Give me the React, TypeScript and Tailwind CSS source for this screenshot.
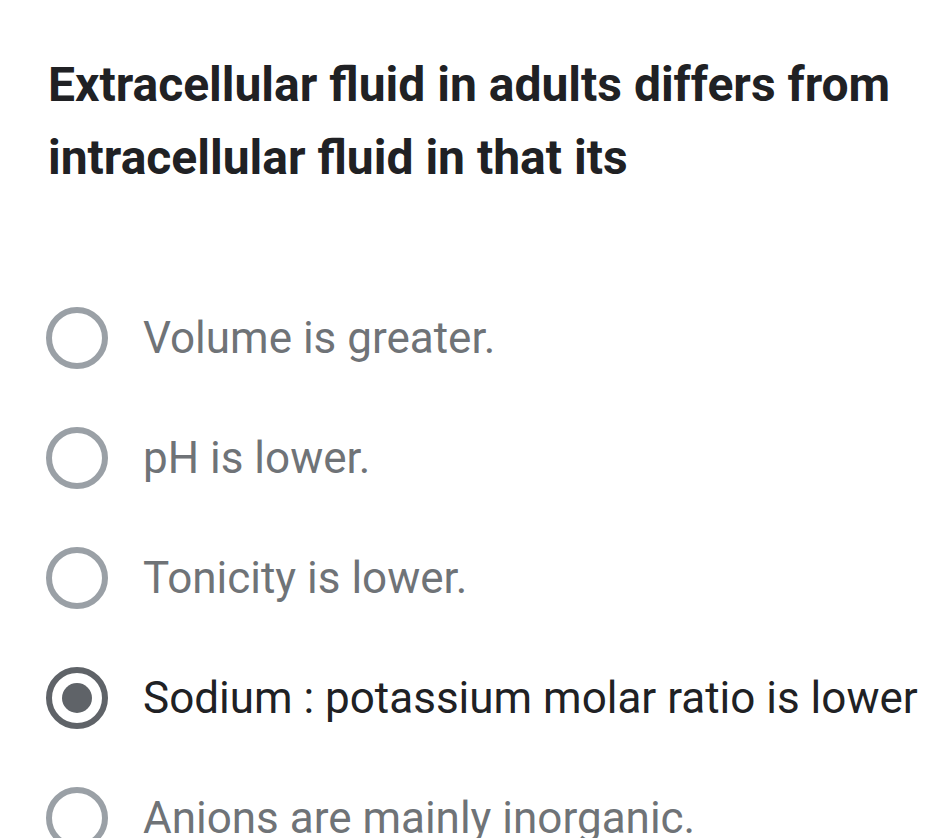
import React from "react";

const options = [
  "Volume is greater.",
  "pH is lower.",
  "Tonicity is lower.",
  "Sodium : potassium molar ratio is lower",
  "Anions are mainly inorganic.",
];

export default function App() {
  const selected = 3;
  return (
    <div className="w-[942px] h-[838px] overflow-hidden bg-white" style={{ fontFamily: "Roboto, 'Noto Sans', sans-serif" }}>
      <div className="pl-[48px] pt-[48px]">
        <h1 className="text-[48px] leading-[73px] font-bold text-[#202124]">
          Extracellular fluid in adults differs from intracellular fluid in that its
        </h1>
      </div>
      <div className="mt-[84px] pl-[46px]">
        {options.map((o, i) => (
          <div key={i} className="h-[120px] flex items-center">
            {i === selected ? (
              <div className="w-[62px] h-[62px] rounded-full border-[6px] border-[#5f6368] flex items-center justify-center shrink-0">
                <div className="w-[30px] h-[30px] rounded-full bg-[#5f6368]" />
              </div>
            ) : (
              <div className="w-[62px] h-[62px] rounded-full border-[6px] border-[#9aa0a6] shrink-0" />
            )}
            <span
              className={`ml-[35px] text-[44px] whitespace-nowrap ${
                i === selected ? "text-[#202124]" : "text-[#6f7377]"
              }`}
            >
              {o}
            </span>
          </div>
        ))}
      </div>
    </div>
  );
}
